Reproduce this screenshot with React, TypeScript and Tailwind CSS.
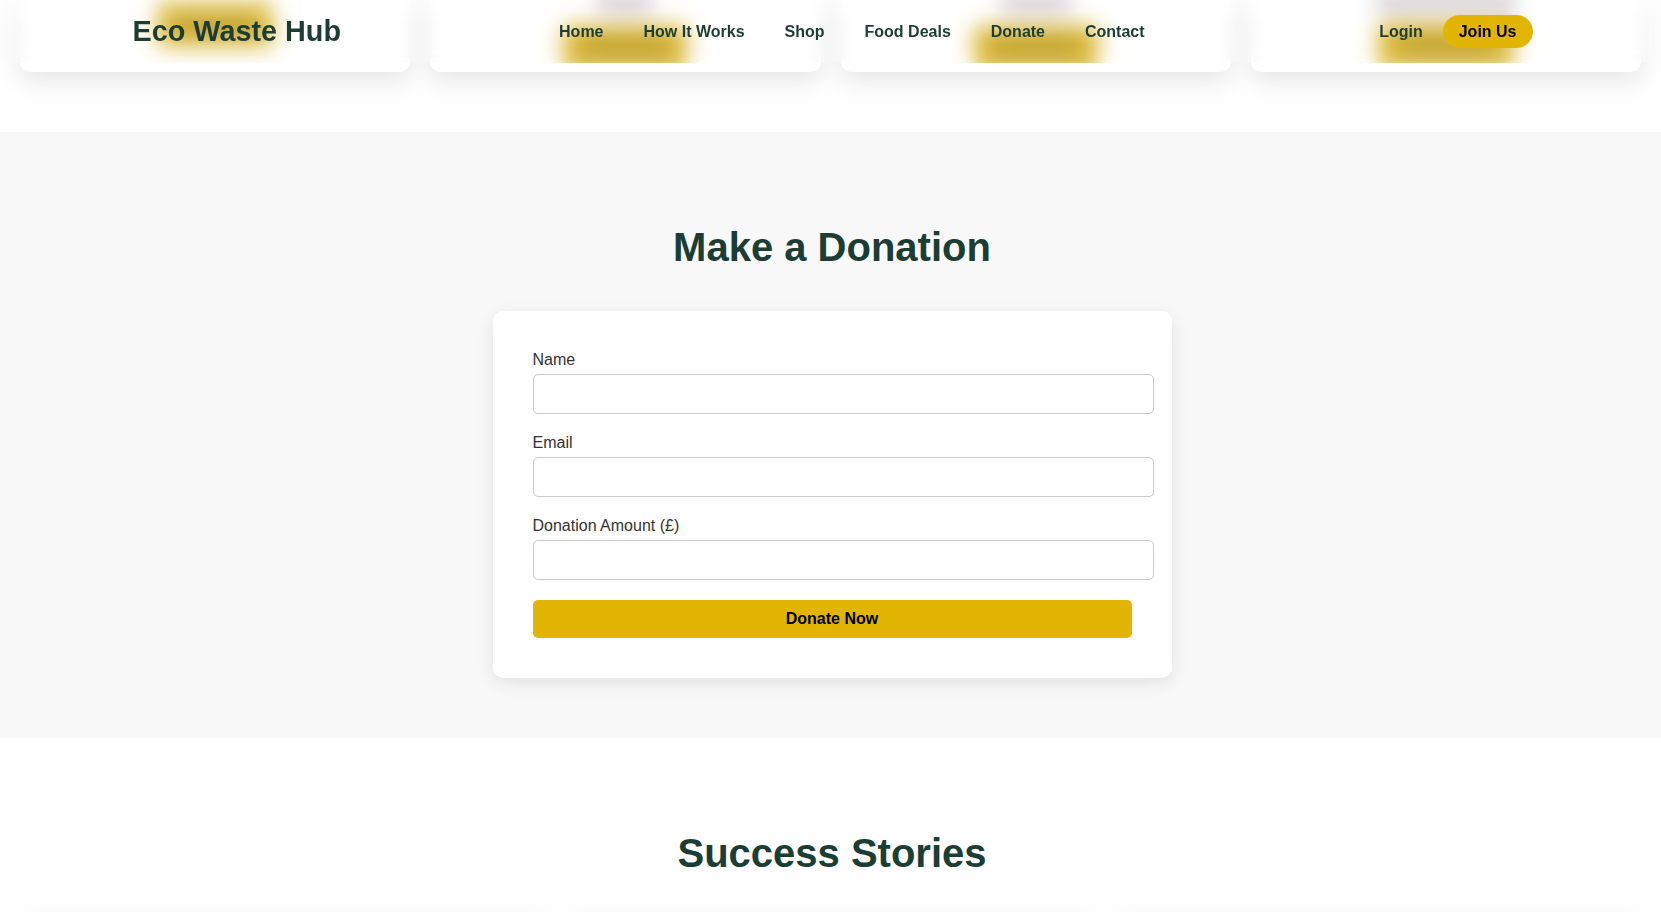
import React from "react";

const navLinks = ["Home", "How It Works", "Shop", "Food Deals", "Donate", "Contact"];

// cards of the section above, mostly scrolled out of view under the header
const topCards = [
  { id: "a", top: 6, img: 0, w: 116 },
  { id: "b", top: 26, img: 56, w: 124 },
  { id: "c", top: 26, img: 70, w: 124 },
  { id: "d", top: 24, img: 140, w: 136 },
];

const App = () => {
  return (
    <div className="min-h-screen bg-white font-['Liberation_Sans',Arial,sans-serif]">
      {/* Header */}
      <header className="fixed top-0 inset-x-0 h-[63px] z-20 pl-[4px] bg-white/10 backdrop-blur-sm">
        <div className="max-w-[1400px] mx-auto h-full flex items-center">
          <h1 className="text-[28.8px] font-bold text-[#1b3d33] leading-none">Eco Waste Hub</h1>
          <nav className="ml-[218px] flex items-center gap-10">
            {navLinks.map((link) => (
              <a key={link} href="#" className="text-[16px] font-bold text-[#1b3d33]">
                {link}
              </a>
            ))}
          </nav>
          <div className="ml-auto flex items-center gap-5">
            <a href="#" className="text-[16px] font-bold text-[#1b3d33]">
              Login
            </a>
            <button className="h-[33px] px-4 rounded-full bg-[#e2b504] text-[16px] font-bold text-black">
              Join Us
            </button>
          </div>
        </div>
      </header>

      {/* Previous section (cards), scrolled under the header */}
      <section className="bg-[#fefefe] pb-[60px]">
        <div className="flex gap-5 px-5">
          {topCards.map((card) => (
            <div
              key={card.id}
              className="flex-1 h-[72px] bg-white rounded-b-[10px] shadow-[0_8px_24px_rgba(0,0,0,0.1)]"
            >
              <div className="h-[63px] overflow-hidden">
                <div className="h-[80px] flex flex-col items-center blur-[8px]">
                  {card.img > 0 && (
                    <div className="h-[12px] rounded-b bg-[#bfb8c2]" style={{ width: card.img }}></div>
                  )}
                  <div
                    className="h-[40px] rounded-[6px] bg-[#d8b01c] flex items-center justify-center"
                    style={{ width: card.w, marginTop: card.img > 0 ? card.top - 12 : card.top }}
                  >
                    <div className="w-[70%] h-[12px] rounded bg-[#a88a18]"></div>
                  </div>
                </div>
              </div>
            </div>
          ))}
        </div>
      </section>

      {/* Donation */}
      <section className="bg-[#f8f8f8] pt-[60px] pb-[60px] pl-[3px]">
        <h2 className="mt-[33px] mb-[41px] text-center text-[40px] font-bold text-[#1b3d33] leading-[45px]">
          Make a Donation
        </h2>
        <form className="w-[679px] mx-auto bg-white rounded-[10px] p-10 shadow-[0_5px_18px_rgba(0,0,0,0.09)]">
          {["Name", "Email", "Donation Amount (£)"].map((label) => (
            <div key={label} className="mb-5">
              <label className="block mb-[5px] text-[16px] leading-[18px] text-[#333]">{label}</label>
              <input
                type={label === "Email" ? "email" : label === "Name" ? "text" : "number"}
                className="block w-[calc(100%+22px)] h-[40px] px-[10px] bg-white border border-[#ccc] rounded-[5px] text-[16px] outline-none"
              />
            </div>
          ))}
          <button
            type="button"
            className="w-full h-[38px] rounded-[5px] bg-[#e2b504] text-[16px] font-bold text-black"
          >
            Donate Now
          </button>
        </form>
      </section>

      {/* Success stories */}
      <section className="bg-[#fefefe] pt-[60px] pb-[60px] pl-[3px]">
        <h2 className="mt-[33px] mb-[40px] text-center text-[40px] font-bold text-[#1b3d33] leading-[45px]">
          Success Stories
        </h2>
        <div className="grid grid-cols-3 gap-5 px-5">
          {[0, 1, 2].map((i) => (
            <div key={i} className="h-[260px] bg-white rounded-[10px] shadow-[0_5px_20px_rgba(0,0,0,0.1)]"></div>
          ))}
        </div>
      </section>
    </div>
  );
};

export default App;
